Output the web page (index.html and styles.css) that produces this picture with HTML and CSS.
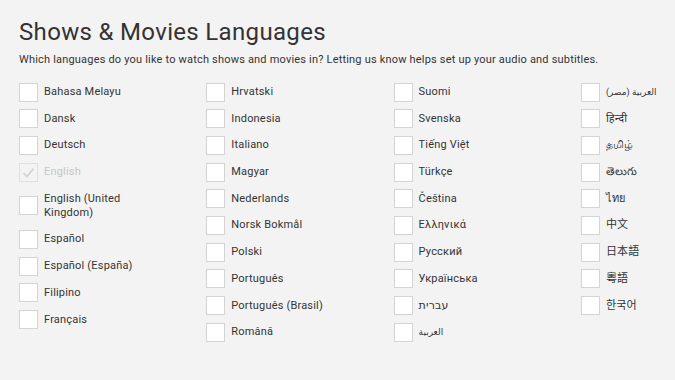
FILE: index.html
```html
<!DOCTYPE html>
<html lang="en">
<head>
  <meta charset="UTF-8" />
  <meta name="viewport" content="width=device-width, initial-scale=1.0" />
  <title>Shows &amp; Movies Languages</title>
  <link rel="stylesheet" href="styles.css">
</head>
<body>
  <div class="page">
    <h1 class="title">Shows &amp; Movies Languages</h1>
    <p class="subtitle">Which languages do you like to watch shows and movies in? Letting us know helps set up your audio and subtitles.</p>

    <div class="lang-grid">
      <ul class="lang-col">
        <li class="lang-item"><span class="box"></span><span class="lang-name">Bahasa Melayu</span></li>
        <li class="lang-item"><span class="box"></span><span class="lang-name">Dansk</span></li>
        <li class="lang-item"><span class="box"></span><span class="lang-name">Deutsch</span></li>
        <li class="lang-item disabled">
          <span class="box">
            <svg viewBox="0 0 19 19" width="19" height="19"><path d="M4.5 10 L8 13.5 L14.5 5.5" fill="none" stroke="#d2d2d2" stroke-width="1.6" /></svg>
          </span>
          <span class="lang-name">English</span>
        </li>
        <li class="lang-item"><span class="box"></span><span class="lang-name">English (United Kingdom)</span></li>
        <li class="lang-item"><span class="box"></span><span class="lang-name">Español</span></li>
        <li class="lang-item"><span class="box"></span><span class="lang-name">Español (España)</span></li>
        <li class="lang-item"><span class="box"></span><span class="lang-name">Filipino</span></li>
        <li class="lang-item"><span class="box"></span><span class="lang-name">Français</span></li>
      </ul>

      <ul class="lang-col">
        <li class="lang-item"><span class="box"></span><span class="lang-name">Hrvatski</span></li>
        <li class="lang-item"><span class="box"></span><span class="lang-name">Indonesia</span></li>
        <li class="lang-item"><span class="box"></span><span class="lang-name">Italiano</span></li>
        <li class="lang-item"><span class="box"></span><span class="lang-name">Magyar</span></li>
        <li class="lang-item"><span class="box"></span><span class="lang-name">Nederlands</span></li>
        <li class="lang-item"><span class="box"></span><span class="lang-name">Norsk Bokmål</span></li>
        <li class="lang-item"><span class="box"></span><span class="lang-name">Polski</span></li>
        <li class="lang-item"><span class="box"></span><span class="lang-name">Português</span></li>
        <li class="lang-item"><span class="box"></span><span class="lang-name">Português (Brasil)</span></li>
        <li class="lang-item"><span class="box"></span><span class="lang-name">Română</span></li>
      </ul>

      <ul class="lang-col">
        <li class="lang-item"><span class="box"></span><span class="lang-name">Suomi</span></li>
        <li class="lang-item"><span class="box"></span><span class="lang-name">Svenska</span></li>
        <li class="lang-item"><span class="box"></span><span class="lang-name">Tiếng Việt</span></li>
        <li class="lang-item"><span class="box"></span><span class="lang-name">Türkçe</span></li>
        <li class="lang-item"><span class="box"></span><span class="lang-name">Čeština</span></li>
        <li class="lang-item"><span class="box"></span><span class="lang-name">Ελληνικά</span></li>
        <li class="lang-item"><span class="box"></span><span class="lang-name">Русский</span></li>
        <li class="lang-item"><span class="box"></span><span class="lang-name">Українська</span></li>
        <li class="lang-item"><span class="box"></span><span class="lang-name" dir="rtl">עברית</span></li>
        <li class="lang-item"><span class="box"></span><span class="lang-name small" dir="rtl">العربية</span></li>
      </ul>

      <ul class="lang-col">
        <li class="lang-item"><span class="box"></span><span class="lang-name small" dir="rtl">العربية (مصر)</span></li>
        <li class="lang-item"><span class="box"></span><span class="lang-name">हिन्दी</span></li>
        <li class="lang-item"><span class="box"></span><span class="lang-name">தமிழ்</span></li>
        <li class="lang-item"><span class="box"></span><span class="lang-name">తెలుగు</span></li>
        <li class="lang-item"><span class="box"></span><span class="lang-name">ไทย</span></li>
        <li class="lang-item"><span class="box"></span><span class="lang-name">中文</span></li>
        <li class="lang-item"><span class="box"></span><span class="lang-name">日本語</span></li>
        <li class="lang-item"><span class="box"></span><span class="lang-name">粵語</span></li>
        <li class="lang-item"><span class="box"></span><span class="lang-name">한국어</span></li>
      </ul>
    </div>
  </div>
</body>
</html>
```

FILE: styles.css
```css
* {
  box-sizing: border-box;
}

html,
body {
  margin: 0;
  padding: 0;
  overflow: hidden;
}

body {
  background: #f3f3f3;
  color: #333;
  font-family: Roboto, "Noto Sans", "DejaVu Sans", "Noto Sans CJK SC", sans-serif;
}

.page {
  padding: 18px 0 0 19px;
}

.title {
  margin: 0;
  font-size: 24px;
  line-height: 28px;
  font-weight: 400;
  letter-spacing: 0.33px;
  color: #333;
}

.subtitle {
  margin: 6.5px 0 0;
  font-size: 11px;
  line-height: 14px;
  letter-spacing: 0.19px;
  color: #333;
}

.lang-grid {
  display: grid;
  grid-template-columns: 187.3px 187.3px 187.3px 1fr;
  margin-top: 15.5px;
}

.lang-col {
  list-style: none;
  margin: 0;
  padding: 0;
  display: flex;
  flex-direction: column;
  gap: 6.7px;
}

.lang-item {
  display: flex;
  align-items: center;
  gap: 6px;
}

.box {
  flex: none;
  width: 19px;
  height: 19px;
  background: #fff;
  border: 1px solid #d4d4d4;
  display: flex;
}

.box svg {
  margin: -1px;
}

.lang-name {
  max-width: 105px;
  padding: 3px 0;
  font-size: 11px;
  line-height: 14px;
  letter-spacing: 0.19px;
  color: #333;
}

.lang-name.small {
  font-size: 9px;
  letter-spacing: 0;
}

.disabled .box {
  background: transparent;
  border-color: #e0e0e0;
}

.disabled .lang-name {
  color: #c6c6c6;
}
```
